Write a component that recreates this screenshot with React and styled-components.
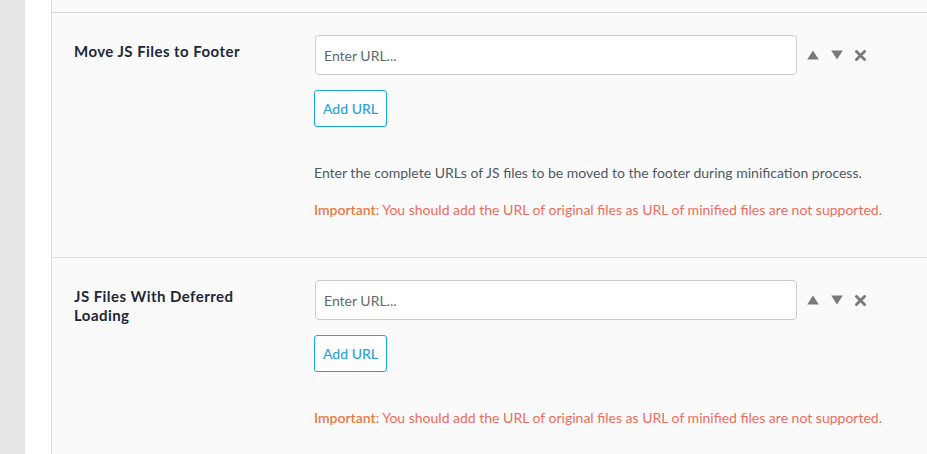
import React from "react";
import styled, { createGlobalStyle } from "styled-components";

const Global = createGlobalStyle`
  html, body { margin: 0; padding: 0; background: #ffffff; }
  body { font-family: Lato, "Open Sans", sans-serif; overflow: hidden; }
  * { box-sizing: border-box; }
`;

const Page = styled.div`
  display: flex;
  height: 454px;
  width: 927px;
`;

const SideGray = styled.div`
  width: 25px;
  background: #e5e5e5;
  flex: none;
`;

const SideWhite = styled.div`
  width: 26px;
  background: #ffffff;
  flex: none;
`;

const Panel = styled.div`
  flex: 1;
  background: #fafafa;
  border-left: 1px solid #dcdcdc;
  display: flex;
  flex-direction: column;
`;

const TopStub = styled.div`
  height: 13px;
  border-bottom: 1px solid #dcdcdc;
  flex: none;
`;

const Section = styled.div`
  display: grid;
  grid-template-columns: 241px 1fr;
  padding: 22px 0 ${(p) => p.$padBottom}px 22px;
  border-bottom: ${(p) => (p.$last ? "none" : "1px solid #dcdcdc")};
  flex: none;
`;

const Label = styled.div`
  font-weight: 700;
  font-size: 15px;
  letter-spacing: 0.45px;
  line-height: 19px;
  color: #1d2839;
  padding-top: 7px;
  padding-right: 45px;
`;

const Field = styled.div`
  display: flex;
  flex-direction: column;
  align-items: flex-start;
`;

const InputRow = styled.div`
  display: flex;
  align-items: center;
`;

const UrlInput = styled.input`
  width: 482px;
  height: 40px;
  border: 1px solid #c9ccd3;
  border-radius: 4px;
  background: #ffffff;
  padding: 0 8px;
  font-family: Lato, sans-serif;
  font-size: 14px;
  color: #333;
  outline: none;
  &::placeholder { color: #62686e; }
`;

const Icons = styled.div`
  display: flex;
  align-items: center;
  gap: 11px;
  margin-left: 9px;
  color: #7a7a7a;
`;

const IconBtn = styled.span`
  display: inline-flex;
  width: 13px;
  height: 12px;
  align-items: center;
  justify-content: center;
`;

const AddButton = styled.button`
  margin-top: 15px;
  margin-left: -1px;
  width: 73px;
  height: 37px;
  border: 1px solid #16abe0;
  border-radius: 3px;
  background: #ffffff;
  color: #2aa1d8;
  font-family: Lato, sans-serif;
  font-size: 14px;
  font-weight: 500;
  padding: 0;
  cursor: pointer;
`;

const Notes = styled.div`
  margin-top: 36px;
  margin-left: -1px;
  display: flex;
  flex-direction: column;
  gap: 17px;
`;

const Note = styled.p`
  margin: 0;
  font-size: 14px;
  line-height: 20px;
  color: ${(p) => (p.$warn ? "#ee6b5d" : "#4f5863")};
`;

const Strong = styled.span`
  color: #e9773f;
  font-weight: 600;
`;

const Up = () => (
  <IconBtn>
    <svg width="12" height="10" viewBox="0 0 12 10"><path d="M6 0.5 L11.8 9.5 L0.2 9.5 Z" fill="currentColor" /></svg>
  </IconBtn>
);
const Down = () => (
  <IconBtn>
    <svg width="12" height="10" viewBox="0 0 12 10"><path d="M0.2 0.5 L11.8 0.5 L6 9.5 Z" fill="currentColor" /></svg>
  </IconBtn>
);
const Close = () => (
  <IconBtn>
    <svg width="11" height="11" viewBox="0 0 11 11"><path d="M1.5 1.5 L9.5 9.5 M9.5 1.5 L1.5 9.5" stroke="currentColor" strokeWidth="2.8" strokeLinecap="square" /></svg>
  </IconBtn>
);

const warning = (
  <Note $warn>
    <Strong>Important</Strong>: You should add the URL of original files as URL of minified files are not supported.
  </Note>
);

function UrlField({ notes }) {
  return (
    <Field>
      <InputRow>
        <UrlInput placeholder="Enter URL..." />
        <Icons>
          <Up />
          <Down />
          <Close />
        </Icons>
      </InputRow>
      <AddButton>Add URL</AddButton>
      <Notes>{notes}</Notes>
    </Field>
  );
}

export default function App() {
  return (
    <>
      <Global />
      <Page>
        <SideGray />
        <SideWhite />
        <Panel>
          <TopStub />
          <Section $padBottom={37}>
            <Label>Move JS Files to Footer</Label>
            <UrlField
              notes={
                <>
                  <Note>Enter the complete URLs of JS files to be moved to the footer during minification process.</Note>
                  {warning}
                </>
              }
            />
          </Section>
          <Section $padBottom={25} $last>
            <Label>JS Files With Deferred Loading</Label>
            <UrlField notes={warning} />
          </Section>
        </Panel>
      </Page>
    </>
  );
}
